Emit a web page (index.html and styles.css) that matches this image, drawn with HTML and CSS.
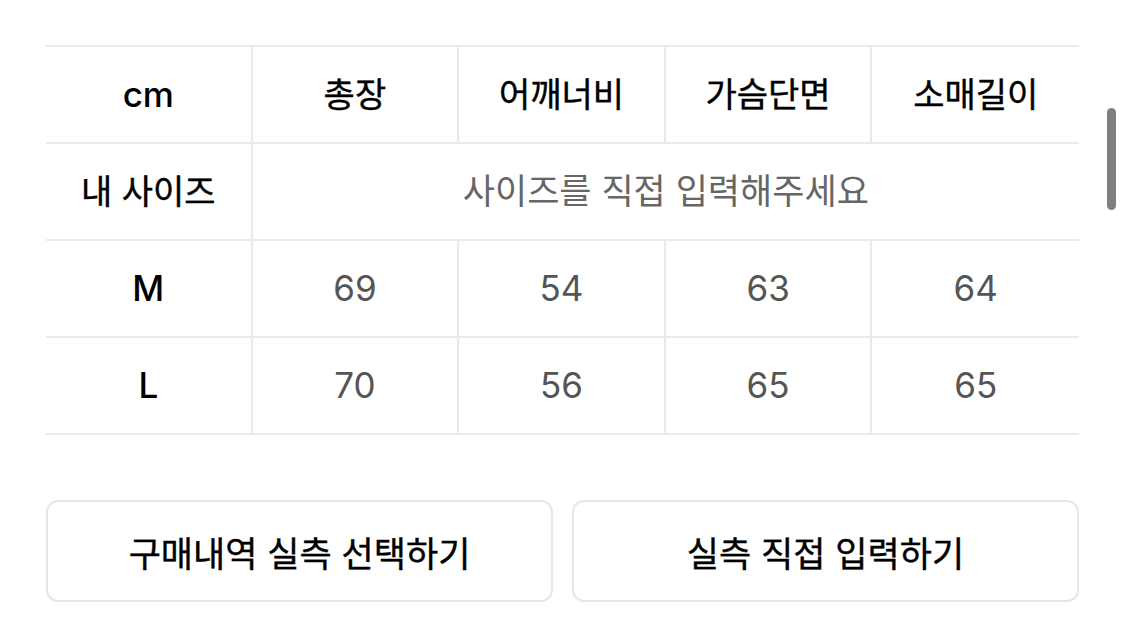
FILE: index.html
```html
<!DOCTYPE html>
<html lang="ko">
<head>
<meta charset="utf-8">
<link rel="stylesheet" href="styles.css">
</head>
<body>
<div class="page">
  <div class="size-table">
    <div class="cell head latin">cm</div>
    <div class="cell head">총장</div>
    <div class="cell head">어깨너비</div>
    <div class="cell head">가슴단면</div>
    <div class="cell head last">소매길이</div>

    <div class="cell head">내 사이즈</div>
    <div class="cell input span4 last">사이즈를 직접 입력해주세요</div>

    <div class="cell head latin">M</div>
    <div class="cell val">69</div>
    <div class="cell val">54</div>
    <div class="cell val">63</div>
    <div class="cell val last">64</div>

    <div class="cell head latin">L</div>
    <div class="cell val">70</div>
    <div class="cell val">56</div>
    <div class="cell val">65</div>
    <div class="cell val last">65</div>
  </div>

  <div class="actions">
    <button class="btn">구매내역 실측 선택하기</button>
    <button class="btn">실측 직접 입력하기</button>
  </div>
</div>
<div class="scrollbar"></div>
</body>
</html>
```

FILE: styles.css
```css
html, body {
  margin: 0;
  padding: 0;
  background: #ffffff;
}

body {
  font-family: "Inter", "Noto Sans CJK KR", sans-serif;
  width: 1125px;
  height: 617px;
  overflow: hidden;
  position: relative;
}

.page {
  padding: 45px 46px 0 46px;
}

.size-table {
  display: grid;
  grid-template-columns: repeat(5, 1fr);
  border-top: 2px solid #eaeaea;
}

.cell {
  height: 95px;
  display: flex;
  align-items: center;
  justify-content: center;
  border-right: 2px solid #eaeaea;
  border-bottom: 2px solid #eaeaea;
  font-size: 34px;
  line-height: 1;
}

.cell.last {
  border-right: none;
}

.head {
  color: #000000;
  font-weight: 400;
  -webkit-text-stroke: 0.4px #000000;
}

.head.latin {
  font-size: 35px;
  font-weight: 450;
  -webkit-text-stroke: 0;
}

.span4 {
  grid-column: span 4;
}

.input {
  color: #666666;
  font-weight: 400;
  font-size: 35px;
}

.val {
  color: #555555;
  font-weight: 400;
  font-size: 35px;
}

.actions {
  display: flex;
  gap: 19px;
  margin-top: 65px;
}

.btn {
  flex: 1;
  height: 102px;
  background: #ffffff;
  border: 2px solid #e6e6e6;
  border-radius: 12px;
  font-family: "Inter", "Noto Sans CJK KR", sans-serif;
  font-size: 35px;
  font-weight: 400;
  color: #000000;
  -webkit-text-stroke: 0.4px #000000;
  padding: 0;
}

.scrollbar {
  position: absolute;
  left: 1107px;
  top: 108px;
  width: 9px;
  height: 102px;
  border-radius: 5px;
  background: #7f7f7f;
}
```
